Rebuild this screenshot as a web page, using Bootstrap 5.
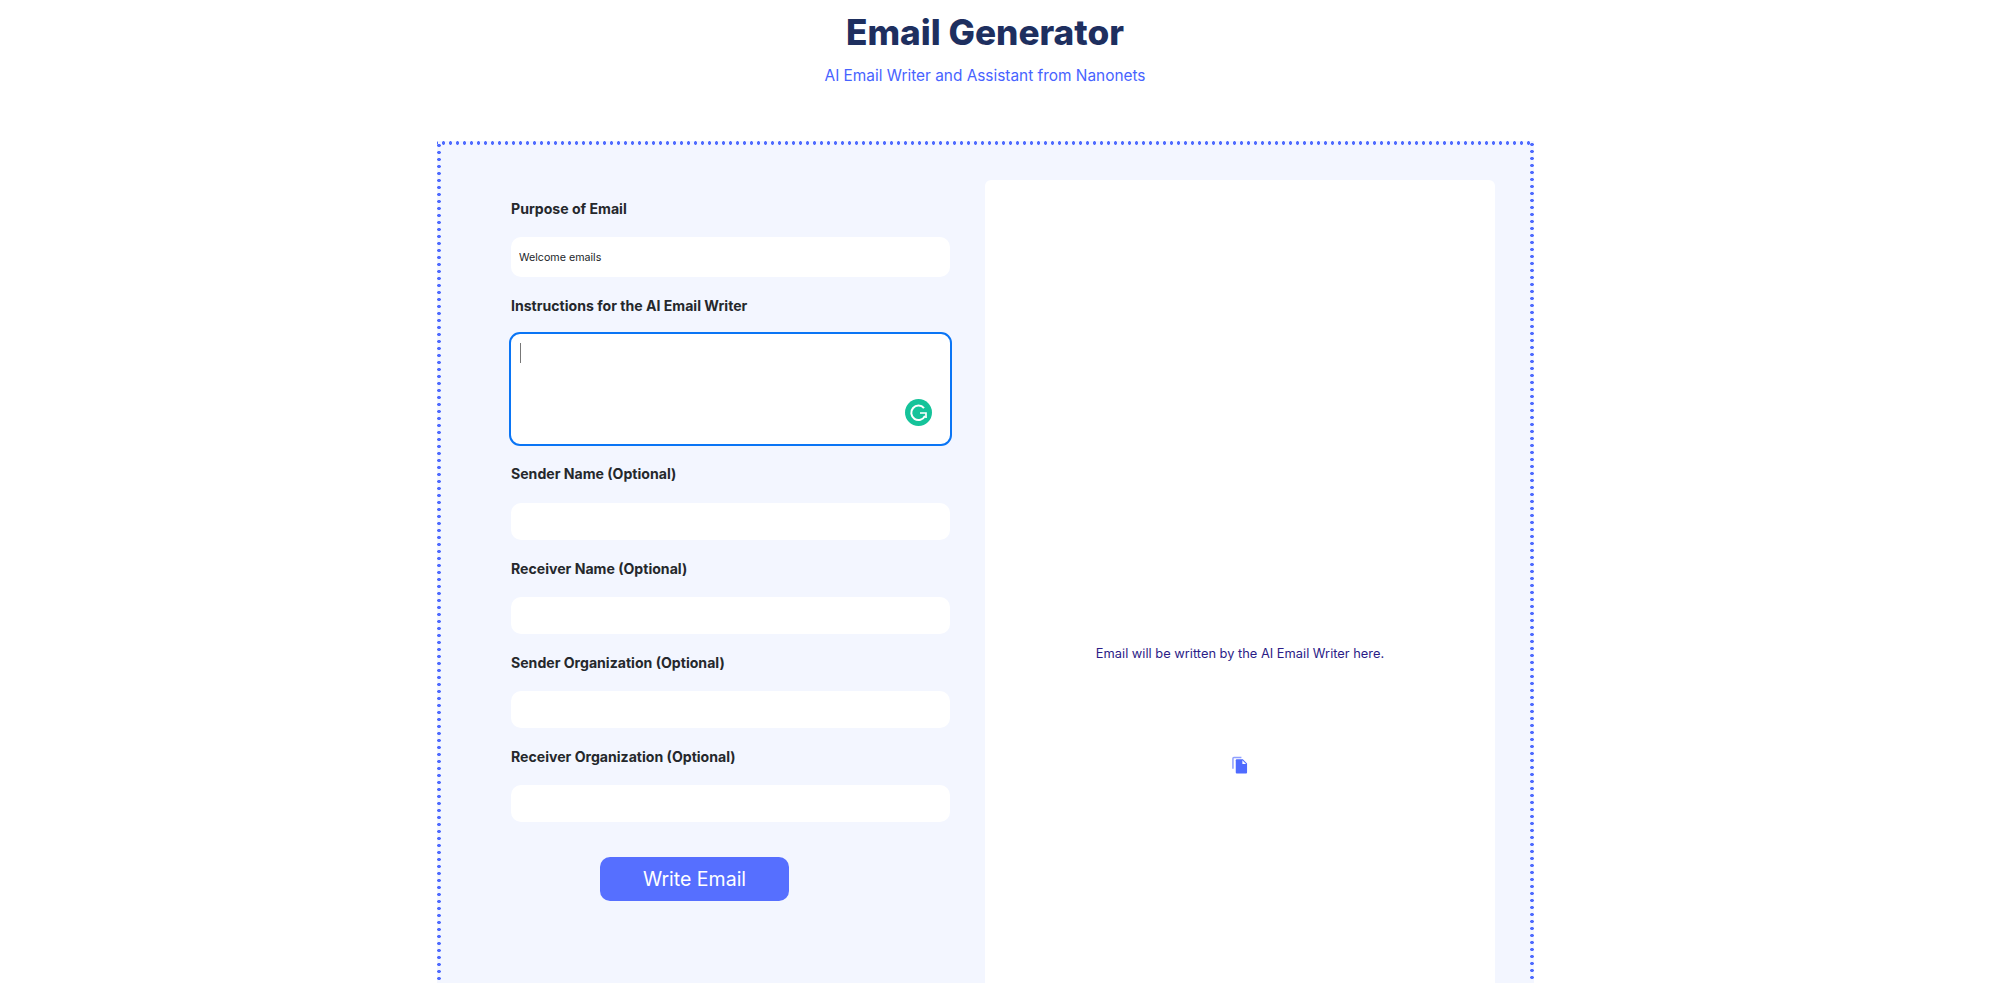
<!DOCTYPE html>
<html lang="en">
<head>
    <meta charset="UTF-8">
    <meta name="viewport" content="width=device-width, initial-scale=1.0">
    <title>Email Generator</title>
    <link href="https://cdn.jsdelivr.net/npm/bootstrap@5.3.3/dist/css/bootstrap.min.css" rel="stylesheet">
    <style>
        html, body { overflow: hidden; }
        body { font-family: Inter, "Liberation Sans", sans-serif; color: #212529; }
        .page-head { padding-right: 30px; }
        .page-title { font-size: 35.2px; font-weight: 800; line-height: 44px; color: #1e2f5f; margin: 10px 0 0; }
        .page-sub { font-size: 15.4px; line-height: 24px; color: #4763ff; margin: 10px 0 0; }
        .gen-box {
            width: 1097px; height: 1000px; margin: 53px auto 0 437px; padding: 39px 37px 0 74px;
            background-color: #f3f6ff;
            background-image:
                radial-gradient(circle, #4f6bff 1.5px, transparent 2px),
                radial-gradient(circle, #4f6bff 1.5px, transparent 2px),
                radial-gradient(circle, #4f6bff 1.5px, transparent 2px);
            background-size: 7px 4px, 4px 7px, 4px 7px;
            background-repeat: repeat-x, repeat-y, repeat-y;
            background-position: 3px 0, 0 1px, 100% 0;
        }
        .form-side { width: 439px; margin-right: 35px; flex: none; }
        .field-label { font-size: 14.1px; font-weight: 700; line-height: 20px; color: #25282c; margin: 0; display: block; }
        .field-input { height: 37px; border: 0; border-radius: 10px; font-size: 10.7px; padding: 0 8px; box-shadow: none; color: #212529; }
        .field-first { height: 40px; }
        .field-area { height: 113.5px; width: 443px; margin-left: -2.5px; border: 2px solid #0a75f5; border-radius: 11px; background: #fff; }
        .caret-mark { position: absolute; left: 9px; top: 9px; width: 1px; height: 20px; background: #777; }
        .grammarly-dot { position: absolute; right: 17.5px; bottom: 18px; width: 27px; height: 27px; }
        .write-btn { width: 189px; height: 44px; margin-left: 89px; padding: 2px 0 0; background: #566fff; border: 0; border-radius: 10px; font-size: 19.5px; line-height: 1; color: #fff; }
        .result-side { width: 510px; height: 1000px; padding-top: 464px; background: #fff; border-radius: 6px 6px 0 0; }
        .result-text { font-size: 12.85px; line-height: 20px; color: #2b1c87; margin: 0; }
        .copy-mark { width: 16px; height: 18px; margin-top: 92px; }
        .mt-a { margin-top: 18px; }
        .mt-b { margin-top: 19px; }
        .mt-c { margin-top: 16px; }
        .mt-d { margin-top: 35px; }
    </style>
</head>
<body>

    <!-- Encabezado -->
    <header class="page-head text-center">
        <h1 class="page-title">Email Generator</h1>
        <p class="page-sub">AI Email Writer and Assistant from Nanonets</p>
    </header>

    <!-- Caja principal -->
    <main class="gen-box d-flex">
        <form class="form-side">
            <label class="field-label mt-b">Purpose of Email</label>
            <input type="text" class="form-control field-input field-first mt-a" value="Welcome emails">

            <label class="field-label mt-b">Instructions for the AI Email Writer</label>
            <div class="field-area position-relative mt-c">
                <span class="caret-mark"></span>
                <svg class="grammarly-dot" viewBox="0 0 27 27">
                    <circle cx="13.5" cy="13.5" r="13.5" fill="#15c39a"/>
                    <path d="M19 9.2A7.2 7.2 0 1 0 20 16.8" fill="none" stroke="#fff" stroke-width="2"/>
                    <path d="M15 14h6v5" fill="none" stroke="#fff" stroke-width="1.7"/>
                </svg>
            </div>

            <label class="field-label mt-a">Sender Name (Optional)</label>
            <input type="text" class="form-control field-input mt-b">

            <label class="field-label mt-b">Receiver Name (Optional)</label>
            <input type="text" class="form-control field-input mt-a">

            <label class="field-label mt-b">Sender Organization (Optional)</label>
            <input type="text" class="form-control field-input mt-a">

            <label class="field-label mt-b">Receiver Organization (Optional)</label>
            <input type="text" class="form-control field-input mt-a">

            <button type="button" class="btn write-btn d-block mt-d">Write Email</button>
        </form>

        <!-- Resultado -->
        <section class="result-side text-center">
            <p class="result-text">Email will be written by the AI Email Writer here.</p>
            <svg class="copy-mark" viewBox="0 0 17 18">
                <path d="M1 13V2a1 1 0 0 1 1-1h8" fill="none" stroke="#8fa0ff" stroke-width="1.6"/>
                <path d="M5 3h6.5L16 7.5V17a1 1 0 0 1-1 1H5a1 1 0 0 1-1-1V4a1 1 0 0 1 1-1z" fill="#4f6bff"/>
                <path d="M11 4l4 4h-4z" fill="#fff"/>
            </svg>
        </section>
    </main>

</body>
</html>
